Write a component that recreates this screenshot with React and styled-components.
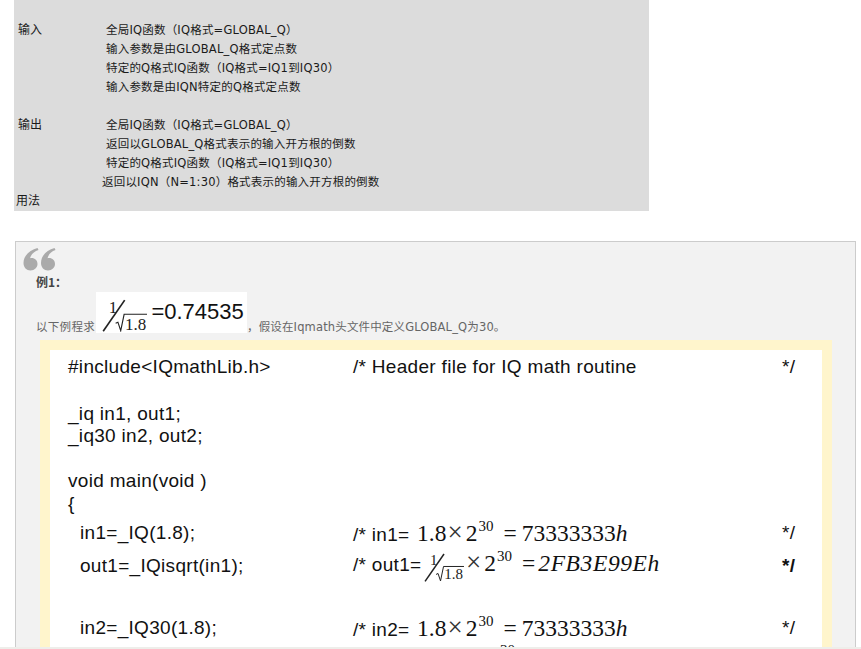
import React from 'react';
import styled, { createGlobalStyle } from 'styled-components';

const cjk = '"Noto Sans CJK SC", "DejaVu Sans", sans-serif';
const latinCjk = '"DejaVu Sans", "Noto Sans CJK SC", sans-serif';

const GlobalStyle = createGlobalStyle`
  html, body {
    margin: 0;
    padding: 0;
    background: #fff;
  }
`;

const usageRows = [
  { label: '输入', text: '全局IQ函数（IQ格式=GLOBAL_Q）' },
  { text: '输入参数是由GLOBAL_Q格式定点数' },
  { text: '特定的Q格式IQ函数（IQ格式=IQ1到IQ30）' },
  { text: '输入参数是由IQN特定的Q格式定点数' },
  {},
  { label: '输出', text: '全局IQ函数（IQ格式=GLOBAL_Q）' },
  { text: '返回以GLOBAL_Q格式表示的输入开方根的倒数' },
  { text: '特定的Q格式IQ函数（IQ格式=IQ1到IQ30）' },
  { text: '返回以IQN（N=1:30）格式表示的输入开方根的倒数', outdent: true },
  { label: '用法', flush: true },
];

const Fraction = ({ size, inComment }) => (
  <FractionBox $size={size} $inComment={inComment}>
    <FractionLines viewBox="0 0 40 29">
      <path d="M1 28.5 L20 1" stroke="#222" strokeWidth="1.5" fill="none" />
      <path d="M12 21.5 L14 20.5 L16.5 28 L19.5 13.5 L40 13.5" stroke="#222" strokeWidth="1" fill="none" />
    </FractionLines>
    <Numerator>1</Numerator>
    <Radicand>1.8</Radicand>
  </FractionBox>
);

const PowerOfTwo = () => (
  <>
    <Times>×</Times>
    <Two>2</Two>
    <Sup>30</Sup>
    <Equals>=</Equals>
  </>
);

const Result = ({ value }) => (
  <Number $gap={5}>
    {value}
    <i>h</i>
  </Number>
);

const App = () => (
  <Page>
    <GlobalStyle />
    <Content>
      <UsagePanel>
        {usageRows.map((row, index) => (
          <UsageRow key={index} $flush={row.flush}>
            <UsageLabel $flush={row.flush}>{row.label}</UsageLabel>
            <UsageText $outdent={row.outdent}>{row.text}</UsageText>
          </UsageRow>
        ))}
      </UsagePanel>

      <QuotePanel>
        <QuoteMark viewBox="0 0 33 24">
          <path d="M14.5 1 C7 3 0.5 8.5 0.5 16 C0.5 20.5 3.5 23.5 7.5 23.5 C11.5 23.5 14.5 20.5 14.5 17 C14.5 13.5 12 11 8.5 11 C8 11 7.5 11 7 11.2 C8 7.5 11 4.5 15.5 3 Z" fill="#aaa" />
          <path d="M31.5 1 C24 3 18 8.5 18 16 C18 20.5 21 23.5 25 23.5 C29 23.5 32 20.5 32 17 C32 13.5 29.5 11 26 11 C25.5 11 25 11 24.5 11.2 C25.5 7.5 28 4.5 32.5 3 Z" fill="#aaa" />
        </QuoteMark>
        <ExampleTitle>例1：</ExampleTitle>
        <IntroRow>
          <IntroText>以下例程求</IntroText>
          <FormulaImage>
            <Fraction size={17} />
            <FormulaValue>=0.74535</FormulaValue>
          </FormulaImage>
          <IntroText $tight>，假设在Iqmath头文件中定义GLOBAL_Q为30。</IntroText>
        </IntroRow>

        <CodeFrame>
          <CodeRow $h={34}>
            <Code>#include&lt;IQmathLib.h&gt;</Code>
            <Comment>/* Header file for IQ math routine</Comment>
            <CommentEnd>*/</CommentEnd>
          </CodeRow>
          <CodeRow $h={19} />
          <CodeRow $h={22}><Code>_iq in1, out1;</Code></CodeRow>
          <CodeRow $h={20}><Code>_iq30 in2, out2;</Code></CodeRow>
          <CodeRow $h={25} />
          <CodeRow $h={22}><Code>void main(void )</Code></CodeRow>
          <CodeRow $h={24}><Code>{'{'}</Code></CodeRow>
          <CodeRow $h={34}>
            <Code $indent>in1=_IQ(1.8);</Code>
            <Comment>/* in1= <Number $gap={2}>1.8</Number><PowerOfTwo /><Result value="73333333" /></Comment>
            <CommentEnd>*/</CommentEnd>
          </CodeRow>
          <CodeRow $h={32}>
            <Code $indent>out1=_IQisqrt(in1);</Code>
            <Comment>/* out1= <Fraction size={15} inComment /><PowerOfTwo /><Hex>2FB3E99Eh</Hex></Comment>
            <CommentEnd $bold>*/</CommentEnd>
          </CodeRow>
          <CodeRow $h={31} />
          <CodeRow $h={30}>
            <Code $indent>in2=_IQ30(1.8);</Code>
            <Comment>/* in2= <Number $gap={2}>1.8</Number><PowerOfTwo /><Result value="73333333" /></Comment>
            <CommentEnd>*/</CommentEnd>
          </CodeRow>
          <CodeRow $h={20}>
            <span />
            <NextSup>30</NextSup>
          </CodeRow>
        </CodeFrame>
      </QuotePanel>
    </Content>
    <BottomStrip />
  </Page>
);

const Page = styled.div`
  display: flex;
  flex-direction: column;
  width: 861px;
  height: 649px;
  overflow: hidden;
  background: #fff;
`;

const Content = styled.div`
  flex: 1;
  min-height: 0;
  overflow: hidden;
`;

const BottomStrip = styled.div`
  flex: 0 0 2px;
  background: #eeeeea;
`;

const UsagePanel = styled.div`
  box-sizing: border-box;
  width: 635px;
  height: 211px;
  margin-left: 14px;
  padding-top: 21px;
  background: #dcdcdc;
`;

const UsageRow = styled.div`
  display: flex;
  height: 19px;
  line-height: 19px;
  font-family: ${latinCjk};
  font-size: 11.5px;
  letter-spacing: 0.2px;
  color: #1a1a1a;
  white-space: nowrap;
`;

const UsageLabel = styled.div`
  flex: 0 0 92px;
  box-sizing: border-box;
  margin-top: -2px;
  padding-left: ${props => (props.$flush ? '2px' : '4px')};
  font-family: ${cjk};
  font-size: 12px;
  letter-spacing: 0;
`;

const UsageText = styled.div`
  margin-left: ${props => (props.$outdent ? '-4px' : '0')};
`;

const QuotePanel = styled.div`
  box-sizing: border-box;
  width: 841px;
  height: 500px;
  margin: 30px 0 0 15px;
  padding: 5px 23px 0 24px;
  background: #f2f2f2;
  border: 1px solid #ccc;
`;

const QuoteMark = styled.svg`
  display: block;
  width: 33px;
  height: 24px;
  margin-left: -17px;
`;

const ExampleTitle = styled.div`
  height: 21px;
  margin-left: -4px;
  padding-top: 3px;
  box-sizing: border-box;
  line-height: 16px;
  font-family: ${cjk};
  font-size: 12px;
  font-weight: 700;
  color: #444;
`;

const IntroRow = styled.div`
  display: flex;
  align-items: flex-end;
  height: 41px;
  margin-left: -4px;
`;

const IntroText = styled.span`
  font-family: ${latinCjk};
  font-size: 11.5px;
  letter-spacing: ${props => (props.$tight ? '0.15px' : '0.3px')};
  line-height: 13px;
  margin-bottom: -1px;
  color: #666;
  white-space: nowrap;
`;

const FormulaImage = styled.div`
  display: flex;
  align-items: flex-end;
  width: 151px;
  height: 41px;
  box-sizing: border-box;
  margin-left: 1px;
  padding: 0 0 1px 6px;
  background: #fff;
`;

const FormulaValue = styled.span`
  margin: 0 0 8px 4px;
  font-family: "Liberation Sans", sans-serif;
  font-size: 22px;
  line-height: 24px;
  color: #111;
`;

const CodeFrame = styled.div`
  box-sizing: border-box;
  width: 792px;
  height: 340px;
  margin-top: 7px;
  border: 10px solid #fff5cc;
  border-bottom: 0;
  background: #fff;
`;

const CodeRow = styled.div`
  display: grid;
  grid-template-columns: 285px 429px auto;
  align-items: center;
  height: ${props => props.$h}px;
  padding-left: 18px;
  font-family: "Liberation Sans", Arial, sans-serif;
  font-size: 19px;
  letter-spacing: 0.3px;
  color: #111;
  white-space: nowrap;
`;

const Code = styled.div`
  padding-left: ${props => (props.$indent ? '12px' : '0')};
`;

const Comment = styled.div``;

const CommentEnd = styled.div`
  font-weight: ${props => (props.$bold ? 700 : 400)};
`;

const Number = styled.span`
  margin-left: ${props => props.$gap}px;
  font-family: "Liberation Serif", serif;
  font-size: 23.5px;
  letter-spacing: 0;
`;

const Times = styled.span`
  margin-left: 1px;
  font-family: "Liberation Serif", serif;
  font-size: 27px;
  line-height: 0;
  letter-spacing: 0;
  color: #333;
`;

const Two = styled.span`
  margin-left: 3px;
  font-family: "Liberation Serif", serif;
  font-size: 23.5px;
  letter-spacing: 0;
`;

const Sup = styled.sup`
  margin-left: 1px;
  font-family: "Liberation Serif", serif;
  font-size: 15px;
  line-height: 0;
  letter-spacing: 0;
  vertical-align: 10px;
`;

const NextSup = styled.div`
  align-self: start;
  padding-left: 147px;
  font-family: "Liberation Serif", serif;
  font-size: 15px;
  line-height: 14px;
  letter-spacing: 0;
`;

const Equals = styled.span`
  margin-left: 10px;
  font-family: "Liberation Serif", serif;
  font-size: 23.5px;
  letter-spacing: 0;
`;

const Hex = styled.span`
  margin-left: 3px;
  font-family: "Liberation Serif", serif;
  font-size: 23.5px;
  font-style: italic;
  letter-spacing: 0.6px;
`;

const FractionBox = styled.span`
  position: relative;
  display: inline-block;
  width: 2.67em;
  height: 1.93em;
  margin-left: ${props => (props.$inComment ? '-3px' : '0')};
  margin-right: ${props => (props.$inComment ? '1px' : '0')};
  font-family: "Liberation Serif", serif;
  font-size: ${props => props.$size}px;
  line-height: 1;
  letter-spacing: 0;
  vertical-align: -0.67em;
  color: #222;
`;

const FractionLines = styled.svg`
  display: block;
  width: 100%;
  height: 100%;
`;

const Numerator = styled.span`
  position: absolute;
  top: 0;
  left: 0.4em;
`;

const Radicand = styled.span`
  position: absolute;
  top: 0.98em;
  left: 1.35em;
`;

export default App;
